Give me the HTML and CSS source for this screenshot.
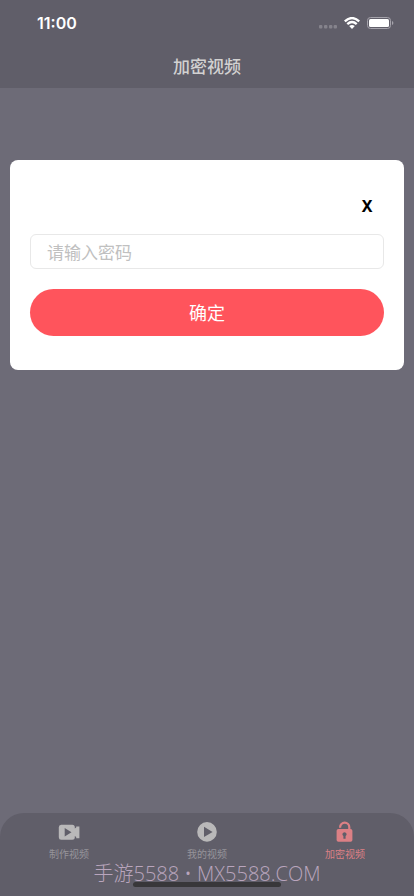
FILE: index.html
```html
<!DOCTYPE html>
<html lang="zh-CN">
<head>
<meta charset="utf-8">
<meta name="viewport" content="width=device-width, initial-scale=1">
<title>加密视频</title>
<link rel="stylesheet" href="styles.css">
</head>
<body>
<div class="app">
  <header class="header">
    <div class="status">
      <time class="clock">11:00</time>
      <div class="indicators">
        <svg width="18" height="4" viewBox="0 0 18 4" fill="#85838c"><rect width="3.4" height="3.6" rx="1"/><rect x="5" width="3.4" height="3.6" rx="1"/><rect x="10" width="3.4" height="3.6" rx="1"/><rect x="14.6" width="3.4" height="3.6" rx="1"/></svg>
        <svg class="wifi" width="16" height="12" viewBox="0 0 16 12"><g fill="none" stroke="#fff" stroke-width="2.4"><path d="M.8 4.3Q8-2.1 15.2 4.3"/><path d="M3.3 7.1Q8 3 12.7 7.1"/></g><path d="M5.2 9Q8 6.8 10.8 9L8 11.9Z" fill="#fff"/></svg>
        <svg class="battery" width="27" height="12" viewBox="0 0 27 12"><rect x=".5" y=".5" width="23" height="11" rx="3" fill="none" stroke="#a5a3ab"/><rect x="2" y="2" width="20" height="8" rx="1.5" fill="#fff"/><path d="M25 4Q26.4 4.6 26.4 6T25 8Z" fill="#a5a3ab"/></svg>
      </div>
    </div>
    <h1 class="title">加密视频</h1>
  </header>
  <main class="content">
    <form class="dialog" role="dialog" aria-label="输入密码">
      <button class="close" type="button" aria-label="关闭">X</button>
      <input class="password" type="password" placeholder="请输入密码" aria-label="请输入密码">
      <button class="confirm" type="button">确定</button>
    </form>
  </main>
  <nav class="tabs">
    <a class="tab" href="#make">
      <svg width="22" height="22" viewBox="0 0 22 22"><path fill="currentColor" fill-rule="evenodd" d="M3.2 3.8H14.3Q16.8 3.8 16.8 6.3V7.6L18.2 6.6V5.5H21.4V17.2H18.2V15.9L16.8 14.9V16.2Q16.8 18.7 14.3 18.7H3.2Q.8 18.7.8 16.2V6.3Q.8 3.8 3.2 3.8ZM6.7 7V15.4L13.5 11.2Z"/></svg>
      <span>制作视频</span>
    </a>
    <a class="tab" href="#mine">
      <svg width="22" height="22" viewBox="0 0 22 22"><path fill="currentColor" fill-rule="evenodd" d="M11 1.1A9.8 9.8 0 1 1 11 20.7A9.8 9.8 0 1 1 11 1.1ZM8 5.8V16L16.6 10.9Z"/></svg>
      <span>我的视频</span>
    </a>
    <a class="tab active" href="#locked" aria-current="page">
      <svg width="22" height="22" viewBox="0 0 22 22"><path d="M6.1 6.8V6.2A4.6 4.6 0 0 1 15.3 6.2V9" fill="none" stroke="currentColor" stroke-width="2.2"/><path fill="currentColor" fill-rule="evenodd" d="M4.4 8H16.6Q18.4 8 18.4 9.8V18.9Q18.4 20.7 16.6 20.7H4.4Q2.6 20.7 2.6 18.9V9.8Q2.6 8 4.4 8ZM10.5 11.2A2.1 2.1 0 0 0 9.4 15.1V17.8H11.6V15.1A2.1 2.1 0 0 0 10.5 11.2Z"/></svg>
      <span>加密视频</span>
    </a>
  </nav>
  <div class="home-bar"></div>
  <p class="watermark">手游5588 • MX5588.COM</p>
</div>
</body>
</html>
```
FILE: styles.css
```css
* {
  box-sizing: border-box;
}

body {
  margin: 0;
  font-family: "Noto Sans CJK SC", sans-serif;
  background: #6d6b77;
}

.app {
  position: relative;
  display: flex;
  flex-direction: column;
  min-height: 100vh;
}

.header {
  background: #605e69;
}

.status {
  display: flex;
  align-items: center;
  justify-content: space-between;
  height: 44px;
  padding: 2px 20px 0 37px;
}

.clock {
  font: 600 16px/20px Inter, sans-serif;
  color: #fff;
}

.indicators {
  display: flex;
  align-items: center;
  gap: 7px;
}

.indicators svg:first-child {
  margin-top: 8px;
}

.title {
  margin: 0;
  font-size: 17px;
  font-weight: 500;
  line-height: 44px;
  text-align: center;
  color: #d2d1d1;
}

.content {
  flex: 1;
  padding: 72px 10px;
}

.dialog {
  display: flex;
  flex-direction: column;
  padding: 34px 20px;
  border-radius: 8px;
  background: #fff;
}

.close {
  align-self: flex-end;
  width: 34px;
  height: 24px;
  margin-bottom: 16px;
  padding: 0;
  border: 0;
  background: none;
  font: 700 16px/24px "Noto Sans", sans-serif;
  color: #000;
}

.password {
  width: 100%;
  height: 35px;
  margin-bottom: 20px;
  padding: 0 16px;
  border: 1px solid #e8e8e8;
  border-radius: 6px;
  background: #fff;
  font: 400 17px/24px "Noto Sans CJK SC", sans-serif;
}

.password::placeholder {
  color: #c0c0c0;
  opacity: 1;
}

.confirm {
  height: 47px;
  padding: 0 0 2px;
  border: 0;
  border-radius: 24px;
  background: #ff545c;
  font: 400 18px/26px "Noto Sans CJK SC", sans-serif;
  color: #fff;
}

.tabs {
  display: grid;
  grid-template-columns: repeat(3, 1fr);
  height: 83px;
  padding-top: 8px;
  border-radius: 24px 24px 0 0;
  background: #605e69;
}

.tab {
  display: flex;
  flex-direction: column;
  align-items: center;
  gap: 4px;
  font-size: 10px;
  line-height: 14px;
  text-decoration: none;
  color: #96949a;
}

.tab svg {
  color: #b9b8b9;
}

.active,
.active svg {
  color: #dc8085;
}

.home-bar {
  position: absolute;
  bottom: 9px;
  left: 50%;
  width: 148px;
  height: 5px;
  border-radius: 3px;
  background: #38373a;
  transform: translateX(-50%);
}

.watermark {
  position: absolute;
  right: 0;
  bottom: 10px;
  left: 0;
  margin: 0;
  font-family: "Open Sans", "Noto Sans CJK SC", sans-serif;
  font-size: 20px;
  font-weight: 300;
  line-height: 24px;
  text-align: center;
  color: #b9a5bd;
}
```
